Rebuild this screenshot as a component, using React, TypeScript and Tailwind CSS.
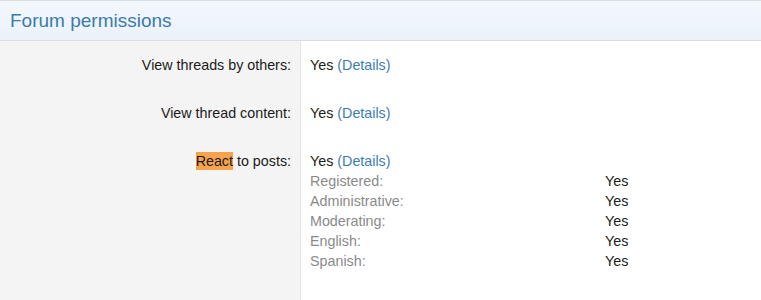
import * as React from "react";

const groups = ["Registered", "Administrative", "Moderating", "English", "Spanish"];

function Label({ children }: { children: React.ReactNode }) {
  return (
    <div className="w-[301px] shrink-0 border-r border-[#e4e4e4] bg-[#f4f4f4] pr-[9px] text-right">
      {children}
    </div>
  );
}

function Value() {
  return (
    <span>
      Yes <span className="text-[#3c7db5]">(Details)</span>
    </span>
  );
}

export default function App() {
  return (
    <div className="h-[300px] w-[761px] overflow-hidden bg-white font-['Liberation_Sans',Arial,sans-serif] text-[14.3px] leading-[20px] text-[#1a1a1a]">
      <div className="flex h-[41px] items-center border-t border-b border-[#d9dee4] bg-gradient-to-b from-[#f3f8fd] to-[#eaf2fa] pl-[10px]">
        <h2 className="text-[19px] text-[#3d7aab]">Forum permissions</h2>
      </div>
      <div className="flex h-[259px] flex-col">
        <div className="flex">
          <Label>
            <div className="py-[14px]">View threads by others:</div>
          </Label>
          <div className="py-[14px] pl-[9px]">
            <Value />
          </div>
        </div>
        <div className="flex">
          <Label>
            <div className="py-[14px]">View thread content:</div>
          </Label>
          <div className="py-[14px] pl-[9px]">
            <Value />
          </div>
        </div>
        <div className="flex flex-1">
          <Label>
            <div className="pt-[14px]">
              <span className="bg-[#f7a34e] py-[1px]">React</span> to posts:
            </div>
          </Label>
          <div className="pt-[14px] pl-[9px]">
            <Value />
            {groups.map((g) => (
              <div key={g} className="flex">
                <div className="w-[295px] text-[#8a8a8a]">{g}:</div>
                <div>Yes</div>
              </div>
            ))}
          </div>
        </div>
      </div>
    </div>
  );
}
